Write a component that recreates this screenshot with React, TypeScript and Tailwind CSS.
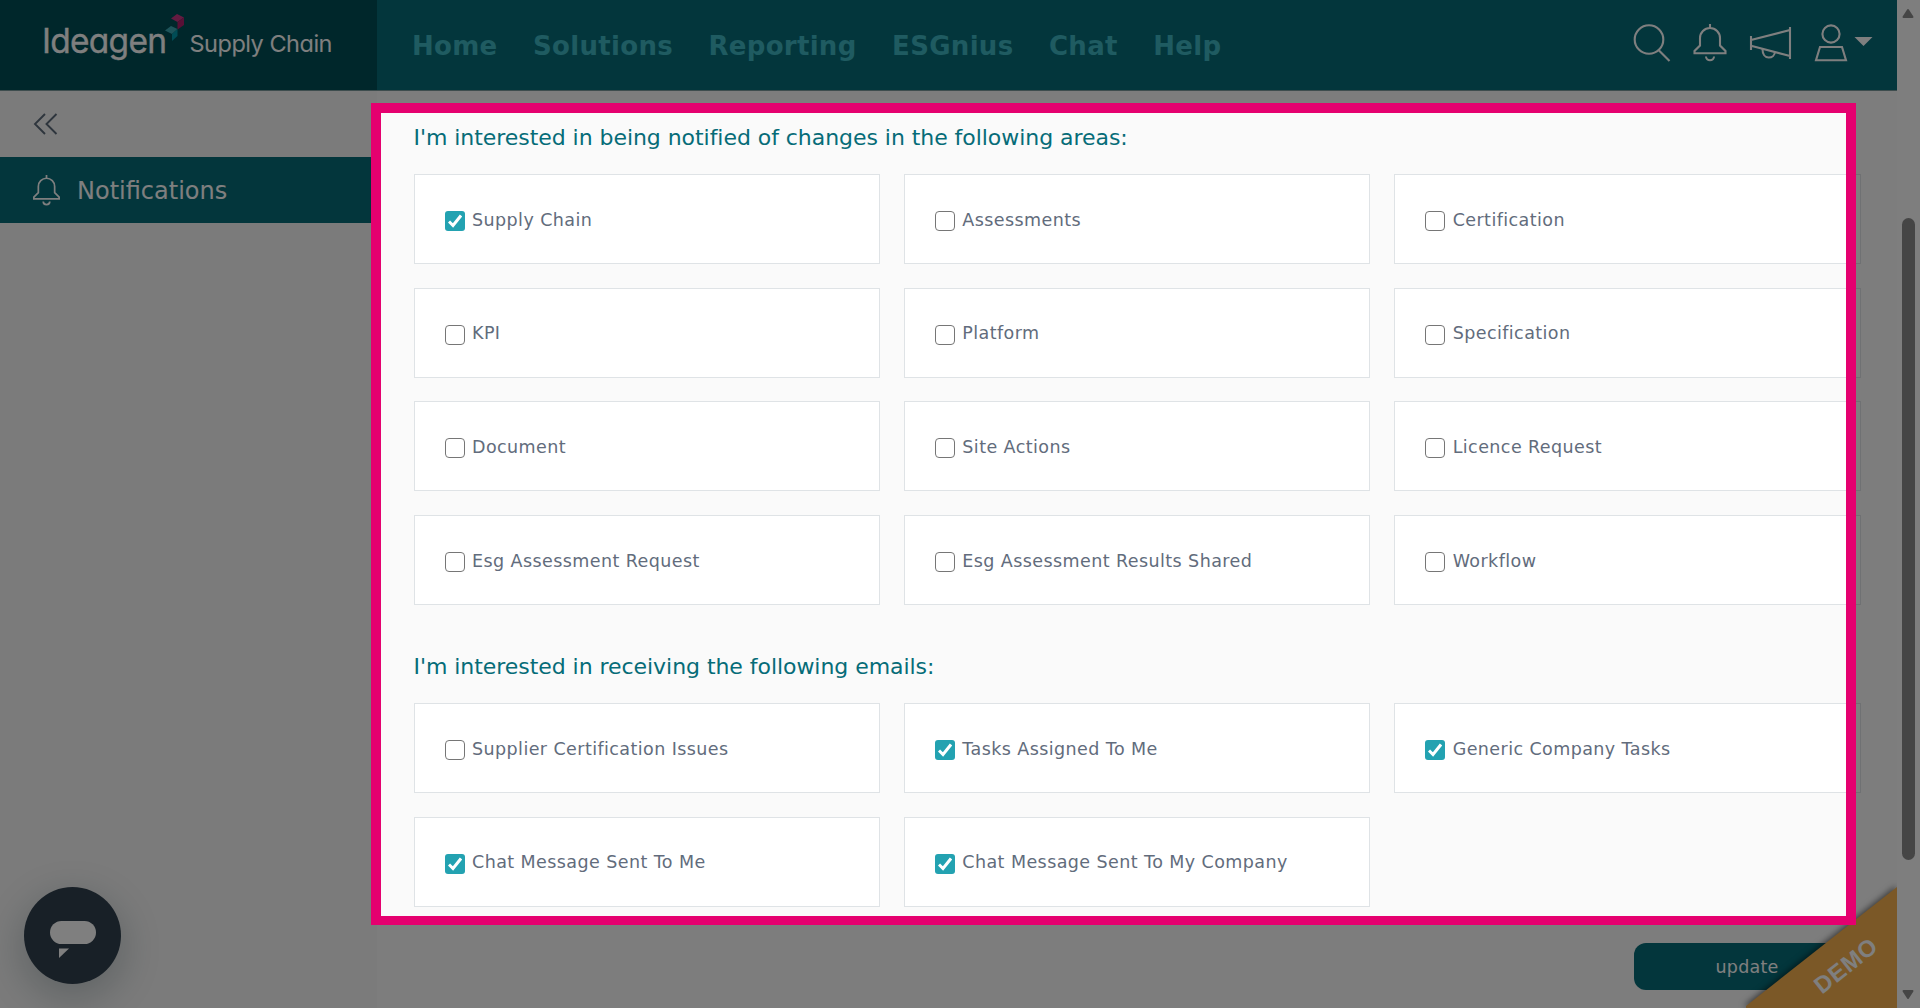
import type { ReactNode } from 'react'

interface Option {
  label: string
  checked?: boolean
}

const navItems = ['Home', 'Solutions', 'Reporting', 'ESGnius', 'Chat', 'Help']

const areas: Option[] = [
  { label: 'Supply Chain', checked: true },
  { label: 'Assessments' },
  { label: 'Certification' },
  { label: 'KPI' },
  { label: 'Platform' },
  { label: 'Specification' },
  { label: 'Document' },
  { label: 'Site Actions' },
  { label: 'Licence Request' },
  { label: 'Esg Assessment Request' },
  { label: 'Esg Assessment Results Shared' },
  { label: 'Workflow' },
]

const emails: Option[] = [
  { label: 'Supplier Certification Issues' },
  { label: 'Tasks Assigned To Me', checked: true },
  { label: 'Generic Company Tasks', checked: true },
  { label: 'Chat Message Sent To Me', checked: true },
  { label: 'Chat Message Sent To My Company', checked: true },
]

const Logo = () => (
  <svg width="377" height="90" viewBox="0 0 377 90" aria-label="Ideagen Supply Chain">
    <g fill="#fff" fontFamily="Inter, Lato, sans-serif" className="[font-feature-settings:'cv11']">
      <text x="42" y="52.500" fontSize="33.500" stroke="#fff" strokeWidth="0.3" textLength="125">
        Ideagen
      </text>
      <text x="189.500" y="52.300" fontSize="23.500" textLength="143">
        Supply Chain
      </text>
    </g>
    <path d="M171 18.500 177 14l7 3.500-6.500 4.500z" fill="#c83783" />
    <path d="M177.500 22 184 17.500V25l-6.500 4.500z" fill="#b0206c" />
    <path d="M165 30.500 171 26l6.500 3-5.500 5z" fill="#3ca9b5" />
    <path d="M172 34 177.500 29V36l-5.500 5z" fill="#0098aa" />
  </svg>
)

const BellIcon = ({ className }: { className: string }) => (
  <svg viewBox="0 0 34 38" fill="none" stroke="currentColor" strokeWidth="2.1" className={className}>
    <path d="M17 0v4M7 21.500V14a10 10 0 0 1 20 0v7.500L32.500 27v2.300h-31V27z" />
    <path d="M13 32.500a4 3.700 0 0 0 8 0" />
  </svg>
)

const HeaderIcons = () => (
  <div className="flex items-start text-white">
    <svg width="38" height="38" viewBox="0 0 38 38" fill="none" stroke="currentColor" strokeWidth="2.1">
      <circle cx="16" cy="15.500" r="14.300" />
      <path d="m25.500 26 11 11" />
    </svg>
    <BellIcon className="ml-[22px] h-[38px] w-[34px]" />
    <svg width="44" height="38" viewBox="0 0 44 38" fill="none" stroke="currentColor" strokeWidth="2.1" className="ml-[22px]">
      <path d="M2 12v14M41 3v32M2 16 41 6M2 21.700 41 32" />
      <path d="M13.500 25c0 5 2.500 8.500 6.200 8.500 3.500 0 6-2.500 6.300-5.500" />
    </svg>
    <svg width="34" height="38" viewBox="0 0 34 38" fill="none" stroke="currentColor" strokeWidth="2.1" className="ml-[21px]">
      <circle cx="17" cy="10" r="8.600" />
      <path d="M6 23h22l4 13.200H2z" />
    </svg>
    <svg width="19" height="10" viewBox="0 0 19 10" className="mt-[13px] ml-[6px]">
      <path d="M.5 0h18L9.500 9z" fill="currentColor" />
    </svg>
  </div>
)

const Header = () => (
  <header className="flex h-[90px] shrink-0 bg-[#066c78]">
    <div className="w-[377px] shrink-0 bg-[#004e56]">
      <Logo />
    </div>
    <nav className="flex flex-1 justify-between pt-6 pr-[24px] pl-[35px]">
      <ul className="flex gap-[35.500px] text-[26px] leading-[44px] font-bold tracking-[0.3px] text-[#3eb6c2]">
        {navItems.map((item) => (
          <li key={item}>{item}</li>
        ))}
      </ul>
      <HeaderIcons />
    </nav>
  </header>
)

const Sidebar = () => (
  <aside className="w-[377px] shrink-0 bg-[#f6f6f6]">
    <div className="flex h-[66px] items-center pl-[33px]">
      <svg width="25" height="22" viewBox="0 0 25 22" fill="none" stroke="#5d6b7a" strokeWidth="1.900">
        <path d="M12 1 2 11l10 10M23.500 1l-10 10 10 10" />
      </svg>
    </div>
    <div className="flex h-[66px] items-center bg-[#066c78] pl-[32px] text-white">
      <BellIcon className="h-[31px] w-[29px]" />
      <span className="ml-[16px] pt-0.5 text-[24px]">Notifications</span>
    </div>
  </aside>
)

const Checkbox = ({ checked }: { checked?: boolean }) =>
  checked ? (
    <span className="mt-[36px] flex size-[20px] shrink-0 items-center justify-center rounded-[3px] bg-[#23a2b1]">
      <svg width="14" height="14" viewBox="0 0 14 14" fill="none" stroke="#fff" strokeWidth="3">
        <path d="m1 7.500 4 4L13 1.500" />
      </svg>
    </span>
  ) : (
    <span className="mt-[36px] size-[20px] shrink-0 rounded-[4px] border-[1.500px] border-[#767676] bg-white" />
  )

const OptionCard = ({ label, checked }: Option) => (
  <label className="flex border border-[#dfe3e6] bg-white pl-[30px]">
    <Checkbox checked={checked} />
    <span className="mt-[30.500px] ml-[7.500px] text-[17.500px] leading-[28px] tracking-[0.42px] whitespace-nowrap text-[#626c7c]">
      {label}
    </span>
  </label>
)

const Section = ({ title, children }: { title: string; children: ReactNode }) => (
  <section>
    <h2 className="pt-px text-[22px] leading-[30px] tracking-[-0.05px] whitespace-nowrap text-[#066c78]">{title}</h2>
    <div className="mt-[21px] grid auto-rows-[90px] grid-cols-3 gap-x-[24px] gap-y-[23.700px]">{children}</div>
  </section>
)

const Scrollbar = () => (
  <div className="flex w-[23px] shrink-0 flex-col items-center bg-[#fcfcfc] pr-px">
    <svg width="12" height="10" viewBox="0 0 12 10" className="mt-[8px]">
      <path d="M6 2 10.500 9h-9z" fill="#8b8b8b" stroke="#8b8b8b" strokeWidth="2" strokeLinejoin="round" />
    </svg>
    <div className="mt-[200px] h-[642px] w-[13px] rounded-full bg-[#8b8b8b]" />
    <svg width="12" height="10" viewBox="0 0 12 10" className="mt-[130px]">
      <path d="M6 8 1.500 1h9z" fill="#8b8b8b" stroke="#8b8b8b" strokeWidth="2" strokeLinejoin="round" />
    </svg>
  </div>
)

const ChatLauncher = () => (
  <div className="absolute top-[887px] left-[24px] flex size-[97px] items-center justify-center rounded-full bg-[#30404e] shadow-[0_12px_36px_4px_rgba(20,50,60,0.22)]">
    <svg width="46" height="37" viewBox="0 0 46 37" fill="#fff" className="mt-[7px]">
      <rect width="46" height="23" rx="11.500" />
      <path d="M9 27.500h10L9 37z" />
    </svg>
  </div>
)

const DemoRibbon = () => (
  <svg width="160" height="132" viewBox="0 0 160 132" className="absolute right-[23px] bottom-0">
    <path d="M160 11v121H9v-2z" fill="#f6b04e" className="drop-shadow-[-1px_-1px_3px_rgba(0,0,0,0.55)]" />
    <text
      x="108"
      y="98"
      fill="#fff"
      fontFamily="'Liberation Sans', Arial, sans-serif"
      fontSize="23.500"
      fontWeight="700"
      textAnchor="middle"
      textLength="73"
      transform="rotate(-38.500 108 89)"
    >
      DEMO
    </text>
  </svg>
)

export default function App() {
  return (
    <div className="relative flex h-[1008px] w-[1920px] overflow-hidden bg-[#fafafa] font-['DejaVu_Sans',Verdana,sans-serif]">
      <div className="flex flex-1 flex-col">
        <Header />
        <div className="flex flex-1 border-t border-[#7d9a9d]">
          <Sidebar />
          <main className="flex w-[1483.500px] shrink-0 flex-col pt-[31px] pl-[36.500px]">
            <Section title="I'm interested in being notified of changes in the following areas:">
              {areas.map((option) => (
                <OptionCard key={option.label} {...option} />
              ))}
            </Section>
            <div className="mt-[46px]">
              <Section title="I'm interested in receiving the following emails:">
                {emails.map((option) => (
                  <OptionCard key={option.label} {...option} />
                ))}
              </Section>
            </div>
            <button className="mt-[36px] h-[47px] w-[227px] self-end rounded-[12px] bg-[#066c78] pt-px text-[17.500px] tracking-[0.2px] text-white">
              update
            </button>
          </main>
        </div>
      </div>
      <Scrollbar />
      <ChatLauncher />
      <DemoRibbon />
      {/* Spotlight frame, its shadow dims the rest of the page */}
      <div className="pointer-events-none absolute top-[103px] left-[371px] h-[822px] w-[1485px] border-[10px] border-b-[9px] border-[#e5006f] shadow-[0_0_0_2000px_rgba(0,0,0,0.5)]" />
    </div>
  )
}
